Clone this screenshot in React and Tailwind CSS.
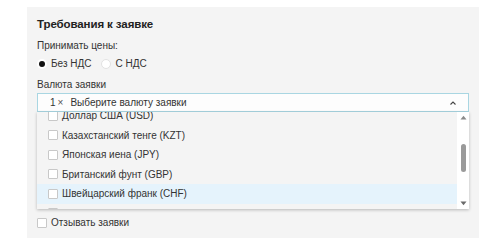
import React from "react";

const items = [
  "Доллар США (USD)",
  "Казахстанский тенге (KZT)",
  "Японская иена (JPY)",
  "Британский фунт (GBP)",
  "Швейцарский франк (CHF)",
  "",
];

function Box() {
  return <span className="w-[10px] h-[10px] shrink-0 bg-white border border-[#c8c8c8] rounded-[1px]" />;
}

export default function App() {
  return (
    <div className="w-[500px] h-[242px] bg-white pt-[7px] pl-[27px]" style={{ fontFamily: '"Liberation Sans", Arial, sans-serif' }}>
      <div className="relative w-[452px] h-[231px] bg-[#f4f4f4] px-[10px] pt-[9px] text-[#333]">
        <div className="text-[11.5px] font-bold text-[#222] leading-[16px] tracking-[-0.1px]">Требования к заявке</div>
        <div className="mt-[8px] text-[10px] leading-[12px]">Принимать цены:</div>
        <div className="mt-[6px] flex items-center text-[10px] leading-[12px] h-[12px]">
          <span className="w-[10px] h-[10px] rounded-full bg-white flex items-center justify-center">
            <span className="w-[6px] h-[6px] rounded-full bg-[#111]" />
          </span>
          <span className="ml-[4px]">Без НДС</span>
          <span className="ml-[10px] w-[10px] h-[10px] rounded-full bg-white border border-[#e2e2e2]" />
          <span className="ml-[4px]">С НДС</span>
        </div>
        <div className="mt-[9px] text-[10px] leading-[12px]">Валюта заявки</div>
        <div className="relative mt-[2px]">
          <div className="h-[19px] bg-[#fdfdfd] border border-[#a9d6e2] flex items-center pl-[12px] pr-[11px] text-[10px]">
            <span>1</span>
            <span className="ml-[2px] text-[#555]">×</span>
            <span className="ml-[7px]">Выберите валюту заявки</span>
            <svg className="ml-auto" width="8" height="6" viewBox="0 0 8 6">
              <path d="M1.5 4.5 L4 2 L6.5 4.5" fill="none" stroke="#444" strokeWidth="1.1" />
            </svg>
          </div>
          <div className="absolute left-0 top-[19px] w-[432px] h-[97px] bg-[#f4f4f4] shadow-[0_1px_3px_rgba(0,0,0,0.25)] flex overflow-hidden z-10">
            <div className="flex-1 overflow-hidden">
              <div className="-mt-[6px]">
                {items.map((t, i) => (
                  <div
                    key={i}
                    className={`h-[19.5px] flex items-center pl-[11px] text-[10px] ${i === 4 ? "bg-[#e5f3fc]" : ""}`}
                  >
                    <Box />
                    <span className="ml-[4px]">{t}</span>
                  </div>
                ))}
              </div>
            </div>
            <div className="w-[12px] bg-white flex flex-col items-center justify-between py-[3px]">
              <svg width="7" height="5" viewBox="0 0 7 5"><path d="M0.5 4.5 L3.5 0.8 L6.5 4.5Z" fill="#8a8a8a" /></svg>
              <div className="flex-1 w-full flex flex-col items-center">
                <div className="mt-[24px] w-[5px] h-[28px] rounded-full bg-[#9a9a9a]" />
              </div>
              <svg width="7" height="5" viewBox="0 0 7 5"><path d="M0.5 0.5 L3.5 4.2 L6.5 0.5Z" fill="#6a6a6a" /></svg>
            </div>
          </div>
        </div>
        <div className="mt-[105px] flex items-center text-[10px] leading-[12px]">
          <Box />
          <span className="ml-[4px]">Отзывать заявки</span>
        </div>
      </div>
    </div>
  );
}
